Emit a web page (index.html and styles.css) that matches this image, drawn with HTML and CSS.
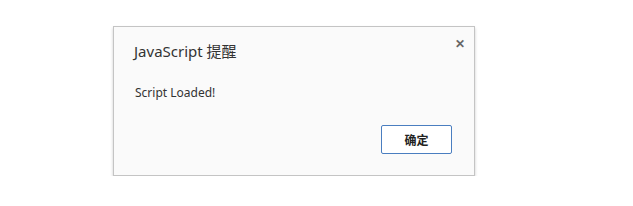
FILE: index.html
```html
<!DOCTYPE html>
<html>
<head>
<meta charset="utf-8">
<link rel="stylesheet" href="styles.css">
</head>
<body>
<div class="dialog">
  <div class="head">
    <span class="title">JavaScript 提醒</span>
    <span class="close">&#x2715;</span>
  </div>
  <div class="msg">Script Loaded!</div>
  <div class="foot">
    <button class="ok">确定</button>
  </div>
</div>
</body>
</html>
```
FILE: styles.css
```css
html, body { margin: 0; padding: 0; background: #fff; }
body {
  font-family: "Noto Sans", "Noto Sans CJK SC", sans-serif;
  color: #222;
  padding: 26px 0 0 113px;
}
.dialog {
  width: 360px;
  height: 148px;
  background: #fafafa;
  border: 1px solid #c4c4c4;
  box-shadow: 0 2px 3px rgba(0,0,0,0.2);
  box-sizing: content-box;
}
.head {
  display: flex;
  justify-content: space-between;
  padding: 10px 9px 0 20px;
  height: 28px;
}
.title {
  font-size: 15px;
  color: #333;
  line-height: 28px;
}
.close {
  font-size: 12px;
  font-weight: bold;
  color: #666;
  line-height: 12px;
  margin-top: 1px;
}
.msg {
  font-size: 12px;
  color: #333;
  padding: 20px 0 0 21px;
  line-height: 16px;
}
.foot {
  display: flex;
  justify-content: flex-end;
  padding: 24px 22px 0 0;
}
.ok {
  width: 71px;
  height: 29px;
  background: #fff;
  border: 1px solid #4a7ec0;
  border-radius: 2px;
  font-family: "Noto Sans CJK SC", sans-serif;
  font-size: 12px;
  font-weight: bold;
  color: #222;
  padding: 0;
}
```
